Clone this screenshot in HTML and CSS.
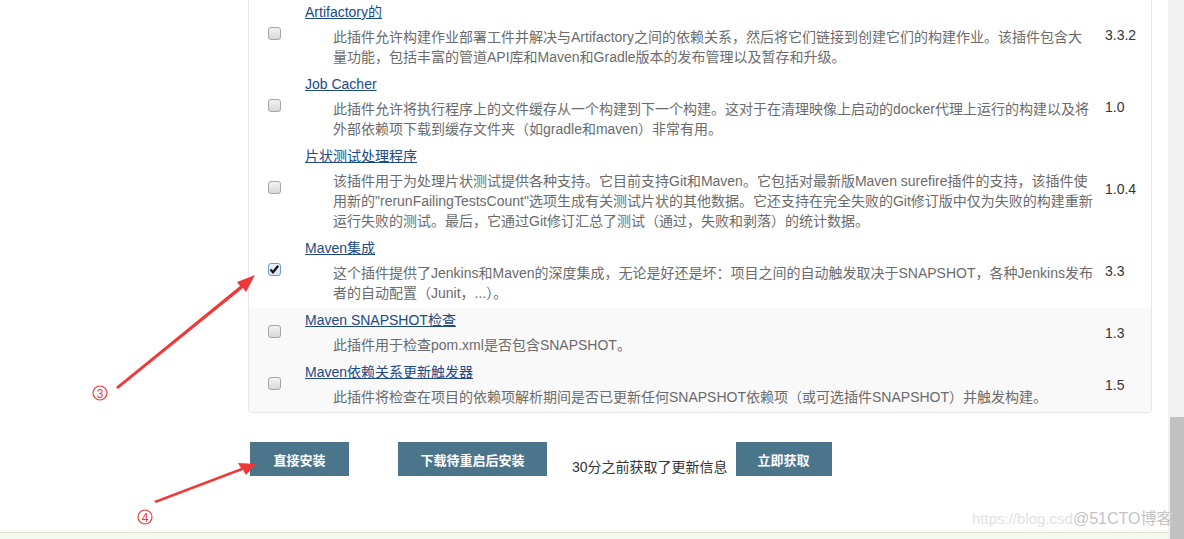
FILE: index.html
```html
<!DOCTYPE html>
<html lang="zh-CN">
  <head>
    <meta charset="UTF-8" />
    <meta name="viewport" content="width=device-width, initial-scale=1.0" />
    <title>插件管理</title>
    <link rel="stylesheet" href="styles.css">
  </head>
  <body>
    <div class="page">
      <div class="main">
        <div class="panel">
          <table class="plugins">
            <colgroup>
              <col class="col-check" />
              <col />
              <col class="col-version" />
            </colgroup>
            <tr>
              <td class="check"><span class="cb"></span></td>
              <td class="name">
                <a href="#">Artifactory的</a>
                <div class="desc">此插件允许构建作业部署工件并解决与Artifactory之间的依赖关系，然后将它们链接到创建它们的构建作业。该插件包含大量功能，包括丰富的管道API库和Maven和Gradle版本的发布管理以及暂存和升级。</div>
              </td>
              <td class="version">3.3.2</td>
            </tr>
            <tr>
              <td class="check"><span class="cb"></span></td>
              <td class="name">
                <a href="#">Job Cacher</a>
                <div class="desc">此插件允许将执行程序上的文件缓存从一个构建到下一个构建。这对于在清理映像上启动的docker代理上运行的构建以及将外部依赖项下载到缓存文件夹（如gradle和maven）非常有用。</div>
              </td>
              <td class="version">1.0</td>
            </tr>
            <tr>
              <td class="check"><span class="cb"></span></td>
              <td class="name">
                <a href="#">片状测试处理程序</a>
                <div class="desc">该插件用于为处理片状测试提供各种支持。它目前支持Git和Maven。它包括对最新版Maven surefire插件的支持，该插件使用新的"rerunFailingTestsCount"选项生成有关测试片状的其他数据。它还支持在完全失败的Git修订版中仅为失败的构建重新运行失败的测试。最后，它通过Git修订汇总了测试（通过，失败和剥落）的统计数据。</div>
              </td>
              <td class="version">1.0.4</td>
            </tr>
            <tr>
              <td class="check">
                <span class="cb checked">
                  <svg viewBox="0 0 11 11" width="11" height="11"><path d="M1.5 5.5 L4 8.2 L9.2 1.8" fill="none" stroke="#111" stroke-width="2.2" /></svg>
                </span>
              </td>
              <td class="name">
                <a href="#">Maven集成</a>
                <div class="desc">这个插件提供了Jenkins和Maven的深度集成，无论是好还是坏：项目之间的自动触发取决于SNAPSHOT，各种Jenkins发布者的自动配置（Junit，...）。</div>
              </td>
              <td class="version">3.3</td>
            </tr>
            <tr class="alt">
              <td class="check"><span class="cb"></span></td>
              <td class="name">
                <a href="#">Maven SNAPSHOT检查</a>
                <div class="desc">此插件用于检查pom.xml是否包含SNAPSHOT。</div>
              </td>
              <td class="version">1.3</td>
            </tr>
            <tr class="alt">
              <td class="check"><span class="cb"></span></td>
              <td class="name">
                <a href="#">Maven依赖关系更新触发器</a>
                <div class="desc">此插件将检查在项目的依赖项解析期间是否已更新任何SNAPSHOT依赖项（或可选插件SNAPSHOT）并触发构建。</div>
              </td>
              <td class="version">1.5</td>
            </tr>
          </table>
        </div>

        <div class="actions">
          <button class="btn btn-install">直接安装</button>
          <button class="btn btn-restart">下载待重启后安装</button>
          <span class="updated">30分之前获取了更新信息</span>
          <button class="btn btn-fetch">立即获取</button>
        </div>

        <div class="footer"></div>
      </div>
      <div class="scrollbar"><div class="thumb"></div></div>
    </div>

    <div class="watermark"><span class="wm-url">https://blog.csd</span><span class="wm-name">@51CTO博客</span></div>

    <svg class="marks" width="1184" height="539" viewBox="0 0 1184 539">
      <polygon points="116,387 240,286 237,282 255,275 246,292 243,288 118,389" fill="#f03838" />
      <circle cx="100" cy="393" r="7" fill="none" stroke="#f03838" stroke-width="1.2" />
      <text x="100" y="397.5" class="mark-num">3</text>
      <polygon points="154,501 241,468 238,463 256,464 246,475 243,470 156,503" fill="#f03838" />
      <circle cx="145" cy="517" r="7" fill="none" stroke="#f03838" stroke-width="1.2" />
      <text x="145" y="521.5" class="mark-num">4</text>
    </svg>
  </body>
</html>
```

FILE: styles.css
```css
html,
body {
  margin: 0;
  padding: 0;
}

body {
  position: relative;
  height: 539px;
  overflow: hidden;
  background: #fff;
  color: #333;
  font-family: "Liberation Sans", "Noto Sans CJK SC", sans-serif;
  font-size: 14px;
}

.page {
  display: flex;
  height: 539px;
}

.main {
  flex: 1;
  display: flex;
  flex-direction: column;
}

/* plugin list */
.panel {
  margin: 0 16px 0 248px;
  border: 1px solid #e6e6e6;
  border-top: 0;
  border-radius: 0 0 4px 4px;
  overflow: hidden;
}

.plugins {
  width: 100%;
  border-collapse: collapse;
  table-layout: fixed;
}

.col-check {
  width: 51px;
}

.col-version {
  width: 51px;
}

.plugins td {
  padding: 2px 0 5px;
  vertical-align: middle;
}

.plugins .alt td {
  background: #f9f9f9;
}

.plugins td.check {
  padding: 0 0 8px;
  text-align: center;
}

.plugins td.name {
  padding-left: 5px;
}

.plugins td.version {
  padding-left: 5px;
  color: #333;
  line-height: 20px;
}

.name a {
  display: inline-block;
  line-height: 20px;
  color: #204a87;
  text-decoration: underline;
}

.desc {
  margin: 5px 6px 0 28px;
  line-height: 20px;
  color: #6b6b6b;
}

.cb {
  display: inline-block;
  box-sizing: border-box;
  width: 13px;
  height: 13px;
  border: 1px solid #a6a6a6;
  border-radius: 3px;
  background: linear-gradient(#f3f3f3, #d9d9d9);
  vertical-align: middle;
}

.cb.checked {
  border-color: #6f9bd3;
  background: linear-gradient(#eef3fa, #d6e2f0);
}

.cb svg {
  display: block;
}

/* buttons */
.actions {
  display: flex;
  align-items: flex-end;
  margin: 29px 0 0 250px;
}

.btn {
  height: 34px;
  padding: 0;
  border: 0;
  background: #4b758b;
  color: #fff;
  font-family: "Liberation Sans", "Noto Sans CJK SC", sans-serif;
  font-size: 13px;
  font-weight: bold;
}

.btn-install {
  width: 99px;
  margin-right: 49px;
}

.btn-restart {
  width: 149px;
  margin-right: 25px;
}

.btn-fetch {
  width: 96px;
}

.updated {
  margin-right: 8px;
  font-size: 14px;
  line-height: 18px;
  color: #333;
}

.footer {
  margin-top: auto;
  height: 6px;
  border-top: 1px solid #dde4d2;
  background: #f5f8ee;
}

.scrollbar {
  width: 16px;
  display: flex;
  flex-direction: column;
  justify-content: flex-end;
  background: #f1f1f1;
}

.thumb {
  height: 122px;
  margin-left: 2px;
  background: #c1c1c1;
}

/* overlays */
.watermark {
  position: absolute;
  left: 972px;
  top: 509px;
  white-space: nowrap;
  line-height: 20px;
}

.wm-url {
  font-size: 15px;
  color: #e2e2e2;
}

.wm-name {
  font-size: 16px;
  color: #c4c4c4;
  text-shadow: 0 0 1px #fff;
}

.marks {
  position: absolute;
  top: 0;
  left: 0;
  pointer-events: none;
}

.mark-num {
  fill: #f03838;
  font-family: "Liberation Sans", sans-serif;
  font-size: 12px;
  text-anchor: middle;
}
```
